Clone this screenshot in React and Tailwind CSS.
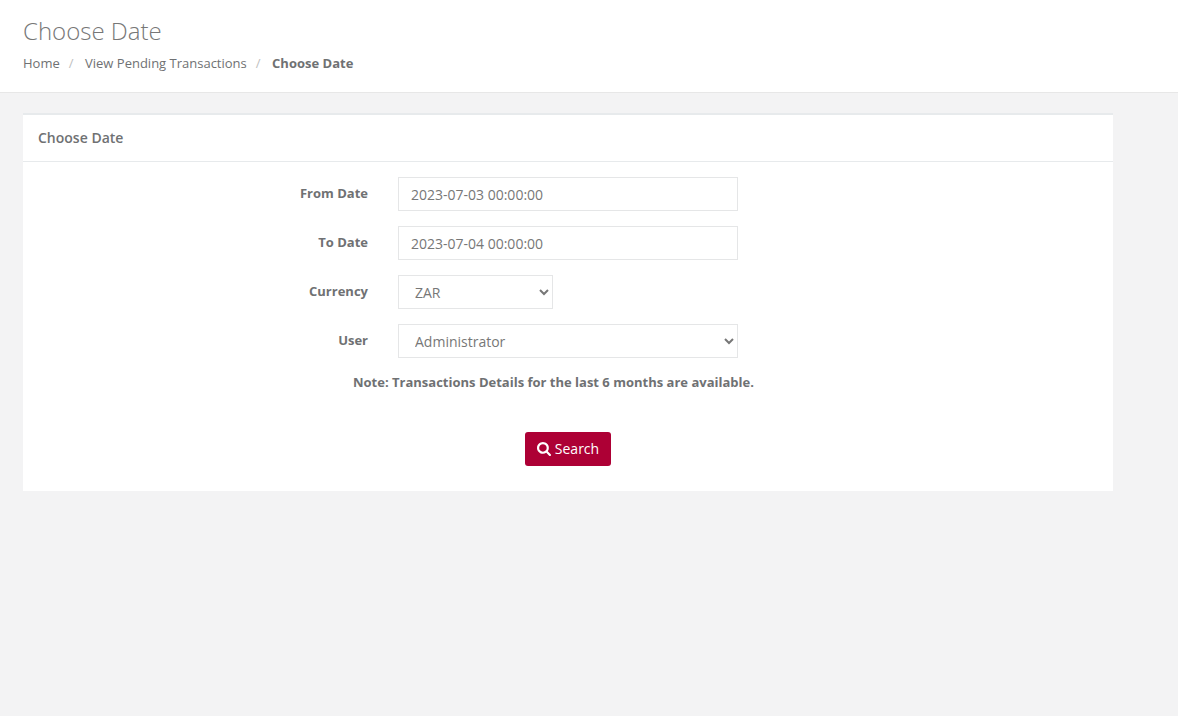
import React from 'react';

const SearchIcon = () => (
  <svg viewBox="0 0 1664 1664" className="w-[14px] h-[14px] fill-current">
    <path d="M1152 704q0-185-131.500-316.500t-316.500-131.500-316.500 131.500-131.500 316.500 131.500 316.500 316.500 131.500 316.500-131.500 131.500-316.500zm512 832q0 52-38 90t-90 38q-54 0-90-38l-343-342q-179 124-399 124-143 0-273.500-55.500t-225-150-150-225-55.500-273.500 55.500-273.500 150-225 225-150 273.500-55.500 273.500 55.500 225 150 150 225 55.500 273.500q0 220-124 399l343 343q37 37 37 90z" />
  </svg>
);

const FormRow = ({ label, children }) => (
  <div className="flex items-start mb-[15px]">
    <label className="w-[345px] pt-[7px] pr-0 text-right text-[13px] leading-[19px] font-bold text-[#6f7173]">
      {label}
    </label>
    <div className="ml-[30px]">{children}</div>
  </div>
);

const TextInput = ({ value }) => (
  <input
    type="text"
    defaultValue={value}
    className="block w-[340px] h-[34px] px-3 border border-[#e5e6e7] bg-white text-sm text-[#777777] outline-none"
  />
);

const Select = ({ className, options }) => (
  <select className={`block h-[34px] pl-3 pr-2 border border-[#e5e6e7] bg-white text-sm text-[#777777] outline-none ${className}`}>
    {options.map((o) => (
      <option key={o}>{o}</option>
    ))}
  </select>
);

export default function App() {
  return (
    <div className="min-h-[716px] bg-[#f3f3f4] font-['Open_Sans',sans-serif] text-[#6f7173]">
      {/* Page heading */}
      <div className="h-[93px] bg-white border-b border-[#e7e7e7] px-[23px] pt-[16px]">
        <h2 className="text-2xl leading-[30px] font-light text-[#777777]">Choose Date</h2>
        <ol className="flex items-center mt-[8px] text-[13px] leading-[18px]">
          <li>Home</li>
          <li className="pl-[9px] pr-[11.500px] text-[#c0c0c0]">/</li>
          <li>View Pending Transactions</li>
          <li className="pl-[9px] pr-[11.500px] text-[#c0c0c0]">/</li>
          <li className="font-bold">Choose Date</li>
        </ol>
      </div>

      {/* Card */}
      <div className="ml-[23px] mt-[20px] w-[1090px] h-[378px] bg-white border-t-2 border-[#e7eaec]">
        <div className="h-[47px] px-[15px] border-b border-[#e7eaec] flex items-center">
          <h5 className="text-sm font-semibold">Choose Date</h5>
        </div>

        <div className="pt-[15px]">
          <FormRow label="From Date">
            <TextInput value="2023-07-03 00:00:00" />
          </FormRow>
          <FormRow label="To Date">
            <TextInput value="2023-07-04 00:00:00" />
          </FormRow>
          <FormRow label="Currency">
            <Select className="w-[155px]" options={['ZAR']} />
          </FormRow>
          <FormRow label="User">
            <Select className="w-[340px]" options={['Administrator']} />
          </FormRow>

          <p className="ml-[330px] text-[13px] leading-[19px] font-bold">
            Note: Transactions Details for the last 6 months are available.
          </p>

          <div className="mt-[40px] ml-[502px]">
            <button className="flex items-center justify-center gap-1 w-[86px] h-[34px] rounded-[3px] bg-[#ad0035] text-sm text-white">
              <SearchIcon />
              Search
            </button>
          </div>
        </div>
      </div>
    </div>
  );
}
